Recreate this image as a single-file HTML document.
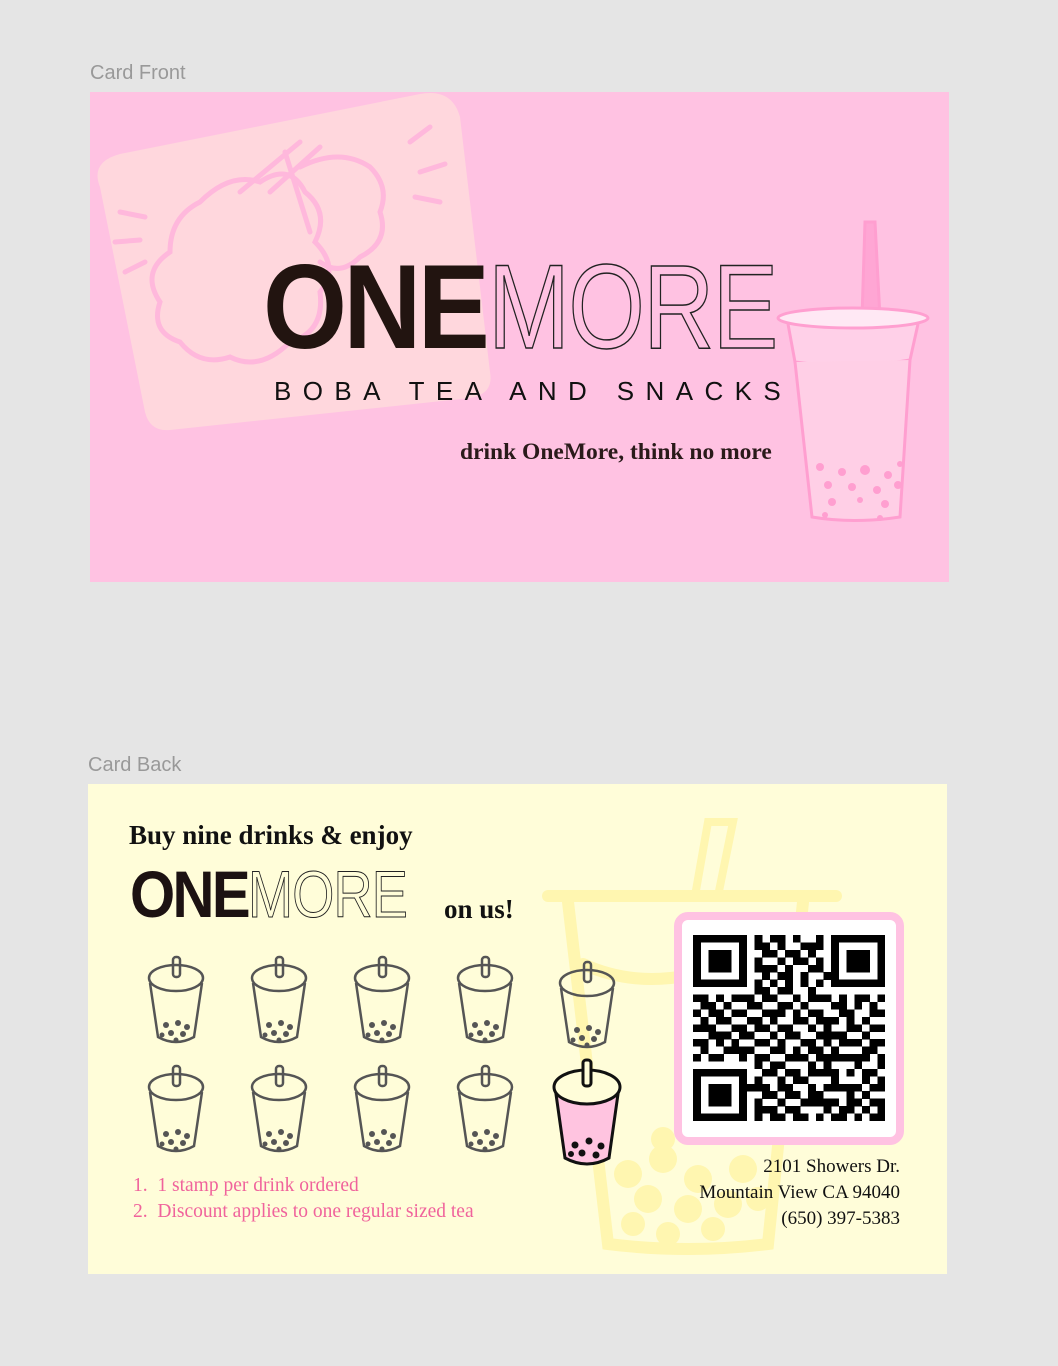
<!DOCTYPE html>
<html><head><meta charset="utf-8"><style>
html,body{margin:0;padding:0;background:#e5e5e5;width:1058px;height:1366px;overflow:hidden;position:relative;font-family:"Liberation Sans",sans-serif}
.lbl{position:absolute;color:#999;font-size:20px}
.card{position:absolute;overflow:hidden}
.abs{position:absolute;white-space:nowrap}
.serif{font-family:"Liberation Serif",serif}
.one{font-weight:bold;color:#221410;letter-spacing:-4px;display:inline-block;transform-origin:left}
.more{color:transparent;-webkit-text-stroke:1.5px #222;font-weight:normal;letter-spacing:-2px;display:inline-block;transform-origin:left}
</style></head><body>
<div class="lbl" style="left:90px;top:62px">Card Front</div>
<div class="lbl" style="left:88px;top:754px">Card Back</div>

<div class="card" style="left:90px;top:92px;width:859px;height:490px;background:#ffc2e2">
<svg width="859" height="490" style="position:absolute;left:0;top:0">
<path d="M10 95 Q0 70 30 62 L330 2 Q362 -4 370 25 L400 280 Q404 302 380 306 L80 338 Q60 340 55 320 Z" fill="#ffd7dd"/>
<g fill="none" stroke="#ffb8dc" stroke-width="5" stroke-linecap="round">
<path d="M110 110 Q140 80 170 90 Q200 70 215 100 Q240 120 225 150 Q250 175 230 200 Q235 240 200 250 Q170 280 140 265 Q110 275 90 250 Q60 240 70 210 Q50 180 80 160 Q80 125 110 110Z"/>
<path d="M210 75 Q250 55 280 75 Q300 95 290 120 Q300 150 270 165 Q250 185 230 170"/>
<path d="M150 100 L210 50 M180 100 L230 55 M195 60 L220 140"/>
<path d="M30 120 L55 125 M25 150 L50 148 M35 180 L55 170 M320 50 L340 35 M330 80 L355 72 M325 105 L350 110"/>
</g>
<g fill="none" stroke="#ff9fd0" stroke-width="3">
<path d="M775 130 L785 130 L790 226 L772 226 Z" fill="#ffa6d4"/>
<path d="M698 232 L705 270 Q763 278 820 268 L828 232" fill="#ffd0e8"/>
<path d="M705 270 L722 425 Q763 432 810 425 L820 268" fill="#ffcfe6"/>
<ellipse cx="763" cy="226" rx="75" ry="10" fill="#ffe8f4"/>
</g>
<g fill="#ff9fd0">
<circle cx="730" cy="375" r="4"/><circle cx="752" cy="380" r="4"/><circle cx="775" cy="378" r="5"/><circle cx="798" cy="383" r="4"/><circle cx="810" cy="372" r="3"/>
<circle cx="738" cy="393" r="4"/><circle cx="762" cy="395" r="4"/><circle cx="787" cy="398" r="4"/><circle cx="808" cy="393" r="4"/>
<circle cx="742" cy="410" r="4"/><circle cx="770" cy="408" r="3"/><circle cx="795" cy="412" r="4"/><circle cx="735" cy="423" r="3"/><circle cx="790" cy="426" r="3"/>
</g>
</svg>
<div class="abs" style="left:173px;top:155px;font-size:120px;line-height:120px"><span class="one" style="transform:scaleX(0.9);width:222px">ONE</span><span class="more" style="transform:scaleX(0.82);margin-left:3px">MORE</span></div>
<div class="abs" style="left:184px;top:284px;font-size:26px;letter-spacing:11.4px;color:#111">BOBA TEA AND SNACKS</div>
<div class="abs serif" style="left:370px;top:347px;font-size:23.5px;font-weight:bold;color:#2a1a1a">drink OneMore, think no more</div>
</div>

<div class="card" style="left:88px;top:784px;width:859px;height:490px;background:#fffdd9">
<svg width="859" height="490" style="position:absolute;left:0;top:0">
<g fill="none" stroke="#fff6b0" stroke-width="12" stroke-linecap="round">
<path d="M620 38 L645 38 L630 112 L607 112 Z" stroke-width="8"/>
<path d="M460 112 L748 112"/>
<path d="M480 118 L520 460 Q600 470 680 460 L715 118"/>
<path d="M495 180 Q560 210 640 180"/>
</g>
<g fill="#fff6b0">
<circle cx="540" cy="390" r="14"/><circle cx="575" cy="375" r="14"/><circle cx="610" cy="395" r="14"/><circle cx="655" cy="385" r="14"/><circle cx="560" cy="415" r="14"/><circle cx="600" cy="425" r="14"/><circle cx="640" cy="420" r="14"/><circle cx="670" cy="415" r="12"/><circle cx="545" cy="440" r="12"/><circle cx="580" cy="450" r="12"/><circle cx="625" cy="445" r="12"/><circle cx="575" cy="355" r="12"/>
</g>
</svg>
<div class="abs serif" style="left:41px;top:36px;font-size:27px;font-weight:bold;color:#111">Buy nine drinks &amp; enjoy</div>
<div class="abs" style="left:42px;top:77px;font-size:66px;line-height:66px"><span class="one" style="letter-spacing:-3px;color:#1c1212;transform:scaleX(0.88);width:118px">ONE</span><span class="more" style="-webkit-text-stroke:1px #222;letter-spacing:-1px;transform:scaleX(0.82)">MORE</span></div>
<div class="abs serif" style="left:356px;top:110px;font-size:27px;font-weight:bold;color:#111">on us!</div>

<svg width="560" height="220" style="position:absolute;left:0;top:0;overflow:visible">
<defs><g id="c" fill="none" stroke="#555" stroke-width="2.5">
<rect x="-3" y="0" width="7" height="20" rx="3"/>
<ellipse cx="0" cy="21" rx="27" ry="13"/>
<path d="M-26 26 L-18 80 Q0 90 18 80 L26 26"/>
<g fill="#555" stroke="none"><circle cx="-10" cy="68" r="3"/><circle cx="2" cy="66" r="3"/><circle cx="11" cy="70" r="3"/><circle cx="-5" cy="76" r="3"/><circle cx="7" cy="77" r="3"/><circle cx="-14" cy="78" r="2.5"/><circle cx="0" cy="83" r="2.5"/></g>
</g></defs>
<use href="#c" x="88" y="173"/><use href="#c" x="191" y="173"/><use href="#c" x="294" y="173"/><use href="#c" x="397" y="173"/><use href="#c" x="499" y="178"/>
<use href="#c" x="88" y="282"/><use href="#c" x="191" y="282"/><use href="#c" x="294" y="282"/><use href="#c" x="397" y="282"/>
<g transform="translate(499,276)" stroke="#111" stroke-width="3">
<path d="M-32 27 L-22 98 Q0 110 22 98 L32 27 Z" fill="#ffc4e0"/>
<ellipse cx="0" cy="27" rx="33" ry="17" fill="#fffdd9"/>
<rect x="-4" y="0" width="8" height="26" rx="3" fill="#fffdd9"/>
<g fill="#111" stroke="none"><circle cx="-12" cy="85" r="3.5"/><circle cx="2" cy="81" r="3.5"/><circle cx="14" cy="86" r="3.5"/><circle cx="-5" cy="93" r="3.5"/><circle cx="9" cy="95" r="3.5"/><circle cx="-16" cy="94" r="3"/></g>
</g>
</svg>

<div class="abs" style="left:586px;top:128px;width:214px;height:217px;background:#fff;border:8px solid #ffc2e2;border-radius:14px"></div>
<svg id="qr" width="192" height="186" viewBox="0 0 25 25" preserveAspectRatio="none" style="position:absolute;left:605px;top:151px" shape-rendering="crispEdges"></svg>

<div class="abs serif" style="left:45px;top:389px;font-size:19.5px;color:#f0639c;line-height:26px">1.&nbsp; 1 stamp per drink ordered<br>2.&nbsp; Discount applies to one regular sized tea</div>
<div class="abs serif" style="right:47px;top:370px;font-size:19px;color:#111;line-height:26px;text-align:right">2101 Showers Dr.<br>Mountain View CA 94040<br>(650) 397-5383</div>
</div>
<script>
var rows=["1111111010110100101111111","1000001011010011101000001","1011101001101101001011101","1011101010010110101011101","1011101011101001101011101","1000001001011010011000001","1111111010101010101111111","0000000011011001000000000","1101011101100101110101101","0110100110011010001101010","1011011001110101100110011","0101100110100110111010100","1110011011011001010011011","0011101100101100111100100","1101010011010011010111011","0100111100110101101000110","1011001011001110111111101","0000000010110001010001001","1111111001101101111010110","1000001010010110001000101","1011101111011001011111011","1011101001101101100010100","1011101010010011111011011","1000001011101100010110101","1111111010110110101101011"];
var s="";for(var y=0;y<25;y++)for(var x=0;x<25;x++)if(rows[y][x]=="1")s+='<rect x="'+x+'" y="'+y+'" width="1.02" height="1.02"/>';
document.getElementById("qr").innerHTML=s;
</script>
</body></html>
